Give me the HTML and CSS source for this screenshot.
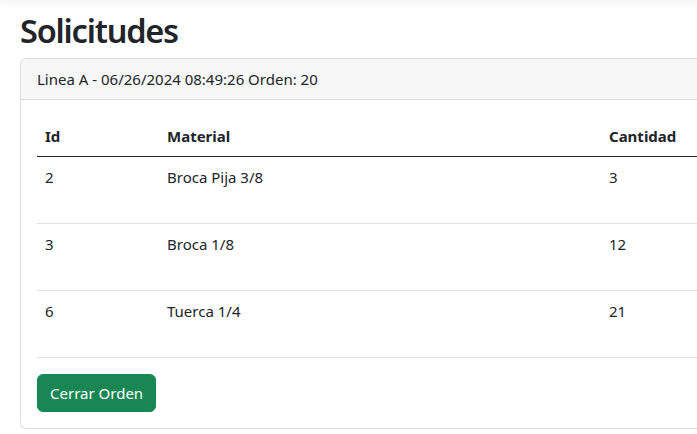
FILE: index.html
```html
<!DOCTYPE html>
<html lang="es">
<head>
<meta charset="utf-8">
<title>Solicitudes</title>
<link rel="stylesheet" href="styles.css">
</head>
<body>
<div class="topbar"></div>
<main class="container">
  <h1 class="title">Solicitudes</h1>
  <section class="card">
    <div class="card-header">Linea A - 06/26/2024 08:49:26 Orden: 20</div>
    <div class="card-body">
      <table class="table">
        <thead>
          <tr>
            <th class="col-id">Id</th>
            <th class="col-mat">Material</th>
            <th class="col-qty">Cantidad</th>
          </tr>
        </thead>
        <tbody>
          <tr><td>2</td><td>Broca Pija 3/8</td><td>3</td></tr>
          <tr><td>3</td><td>Broca 1/8</td><td>12</td></tr>
          <tr><td>6</td><td>Tuerca 1/4</td><td>21</td></tr>
        </tbody>
      </table>
      <button class="btn-success" type="button">Cerrar Orden</button>
    </div>
  </section>
</main>
</body>
</html>
```
FILE: styles.css
```css
html, body {
  margin: 0;
  padding: 0;
  background: #fff;
}
body {
  font-family: "Noto Sans", "Open Sans", sans-serif;
  font-size: 15px;
  line-height: 24px;
  color: #212529;
}
.topbar {
  height: 0;
  box-shadow: 0 0 9px 2px rgba(0,0,0,0.09);
}
.container {
  padding: 11px 0 0 20px;
}
.title {
  margin: 0 0 8px 0;
  font-size: 32.5px;
  font-weight: 600;
  letter-spacing: -1.2px;
  line-height: 39px;
}
.card {
  border: 1px solid #dcdcdc;
  border-right: none;
  border-radius: 6px 0 0 6px;
}
.card-header {
  background: #f7f7f7;
  border-bottom: 1px solid #dcdcdc;
  border-radius: 6px 0 0 0;
  padding: 8px 16px;
}
.card-body {
  padding: 16px 0 16px 16px;
}
.table {
  border-collapse: collapse;
  width: 100%;
  margin-bottom: 16px;
}
.table th {
  text-align: left;
  font-weight: 700;
  padding: 8px;
  border-bottom: 1px solid #212529;
}
.table td {
  padding: 8px;
  height: 50px;
  vertical-align: top;
  border-bottom: 1px solid #dee2e6;
}
.col-id { width: 106px; }
.col-mat { width: 426px; }
.btn-success {
  font-family: inherit;
  font-size: 15px;
  line-height: 24px;
  padding: 6px 12px;
  color: #fff;
  background: #198754;
  border: 1px solid #198754;
  border-radius: 6px;
  cursor: pointer;
}
```
